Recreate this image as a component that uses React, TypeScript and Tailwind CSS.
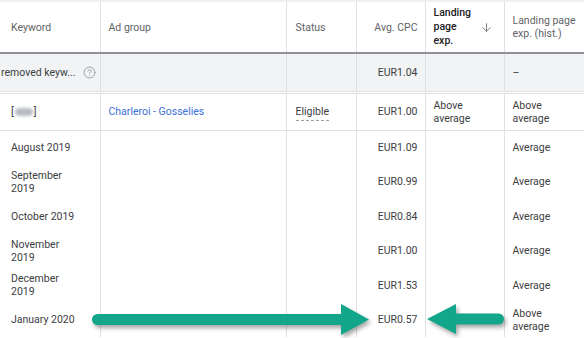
import { ArrowDown, CircleHelp } from "lucide-react";

const months = [
  { name: "August 2019", cpc: "EUR1.09", hist: "Average" },
  { name: "September 2019", cpc: "EUR0.99", hist: "Average" },
  { name: "October 2019", cpc: "EUR0.84", hist: "Average" },
  { name: "November 2019", cpc: "EUR1.00", hist: "Average" },
  { name: "December 2019", cpc: "EUR1.53", hist: "Average" },
  { name: "January 2020", cpc: "EUR0.57", hist: "Above average" },
];

export default function App() {
  return (
    <div
      className="relative h-[338px] w-[584px] overflow-hidden bg-white text-[10.5px] leading-[13px] text-[#3c4043]"
      style={{ fontFamily: "Roboto, 'Liberation Sans', sans-serif" }}
    >
      <table className="w-full table-fixed border-collapse border-t-2 border-[#eef0f1]">
        <colgroup>
          <col className="w-[100px]" />
          <col className="w-[186px]" />
          <col className="w-[70px]" />
          <col className="w-[69px]" />
          <col className="w-[79px]" />
          <col className="w-[80px]" />
        </colgroup>
        <thead>
          <tr className="h-[52px] border-b-2 border-[#8e9195] text-left align-middle text-[#5f6368]">
            <th className="border-r border-[#e0e0e0] pl-[11px] font-normal">Keyword</th>
            <th className="border-r border-[#e0e0e0] pl-[8px] font-normal">Ad group</th>
            <th className="border-r border-[#e0e0e0] pl-[9px] font-normal">Status</th>
            <th className="border-r border-[#e0e0e0] pr-[7px] text-right font-normal">Avg. CPC</th>
            <th className="border-r border-[#e0e0e0] pl-[8px] pr-[11px] font-medium text-[#202124]">
              <div className="flex items-center justify-between leading-[14px]">
                <span>
                  Landing
                  <br />
                  page
                  <br />
                  exp.
                </span>
                <ArrowDown size={13} strokeWidth={1.5} className="text-[#5f6368]" />
              </div>
            </th>
            <th className="pl-[8px] font-normal">
              Landing page
              <br />
              exp. (hist.)
            </th>
          </tr>
        </thead>
        <tbody>
          <tr className="h-[39px] border-b-[3px] border-double border-[#e0e0e0] bg-[#f1f3f4]">
            <td className="border-r border-[#e0e0e0] pl-px">
              <div className="flex items-center justify-between pr-[4px]">
                <span className="whitespace-nowrap">removed keyw...</span>
                <CircleHelp size={13} strokeWidth={1.4} className="text-[#80868b]" />
              </div>
            </td>
            <td className="border-r border-[#e0e0e0]" />
            <td className="border-r border-[#e0e0e0]" />
            <td className="border-r border-[#e0e0e0] pr-[7px] text-right">EUR1.04</td>
            <td className="border-r border-[#e0e0e0]" />
            <td className="pl-[8px]">–</td>
          </tr>
          <tr className="h-[38px] border-b border-[#e0e0e0]">
            <td className="border-r border-[#e0e0e0] pl-[11px]">
              <span className="inline-flex items-center">
                [
                <span className="mx-[1px] inline-block h-[8px] w-[18px] rounded-sm bg-[#b8bcc2] blur-[1.5px]" />
                ]
              </span>
            </td>
            <td className="border-r border-[#e0e0e0] pl-[8px] text-[#3b6fd9]">Charleroi - Gosselies</td>
            <td className="border-r border-[#e0e0e0] pl-[9px]">
              <span className="border-b border-dashed border-[#9aa0a6] pb-[2px]">Eligible</span>
            </td>
            <td className="border-r border-[#e0e0e0] pr-[7px] text-right">EUR1.00</td>
            <td className="border-r border-[#e0e0e0] pl-[8px]">
              Above
              <br />
              average
            </td>
            <td className="pl-[8px]">
              Above
              <br />
              average
            </td>
          </tr>
          {months.map((m) => (
            <tr key={m.name} className="h-[34.5px]">
              <td className="border-r border-[#e0e0e0] pl-[11px] pr-[22px]">{m.name}</td>
              <td className="border-r border-[#e0e0e0]" />
              <td className="border-r border-[#e0e0e0]" />
              <td className="border-r border-[#e0e0e0] pr-[7px] text-right">{m.cpc}</td>
              <td className="border-r border-[#e0e0e0]" />
              <td className="pl-[8px] pr-[20px]">{m.hist}</td>
            </tr>
          ))}
        </tbody>
      </table>

      <svg
        className="pointer-events-none absolute inset-0 drop-shadow-[2px_3px_2px_rgba(0,0,0,0.35)]"
        width="584"
        height="338"
        viewBox="0 0 584 338"
      >
        <rect x="92" y="314" width="256" height="11" rx="5.5" fill="#13a68a" />
        <polygon points="341,304 369,319.5 341,335" fill="#13a68a" />
        <rect x="450" y="313.5" width="54" height="11" rx="5.5" fill="#13a68a" />
        <polygon points="427,319 456,304 456,334" fill="#13a68a" />
      </svg>
    </div>
  );
}
